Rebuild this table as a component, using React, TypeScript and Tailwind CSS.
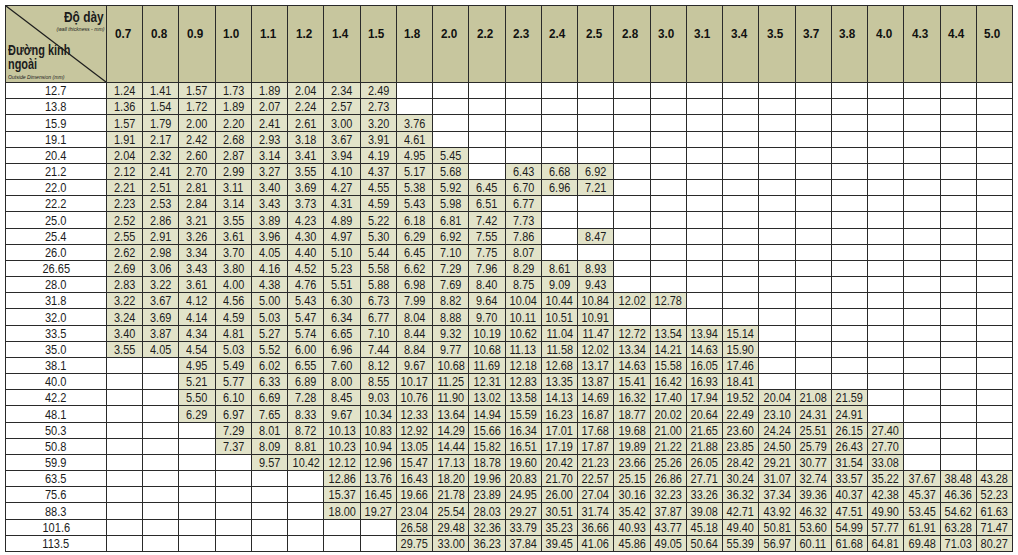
const thick = ["0.7","0.8","0.9","1.0","1.1","1.2","1.4","1.5","1.8","2.0","2.2","2.3","2.4","2.5","2.8","3.0","3.1","3.4","3.5","3.7","3.8","4.0","4.3","4.4","5.0"];

// "-" marks an empty cell
const rows: [string, string][] = [
  ["12.7", "1.24 1.41 1.57 1.73 1.89 2.04 2.34 2.49"],
  ["13.8", "1.36 1.54 1.72 1.89 2.07 2.24 2.57 2.73"],
  ["15.9", "1.57 1.79 2.00 2.20 2.41 2.61 3.00 3.20 3.76"],
  ["19.1", "1.91 2.17 2.42 2.68 2.93 3.18 3.67 3.91 4.61"],
  ["20.4", "2.04 2.32 2.60 2.87 3.14 3.41 3.94 4.19 4.95 5.45"],
  ["21.2", "2.12 2.41 2.70 2.99 3.27 3.55 4.10 4.37 5.17 5.68 - 6.43 6.68 6.92"],
  ["22.0", "2.21 2.51 2.81 3.11 3.40 3.69 4.27 4.55 5.38 5.92 6.45 6.70 6.96 7.21"],
  ["22.2", "2.23 2.53 2.84 3.14 3.43 3.73 4.31 4.59 5.43 5.98 6.51 6.77"],
  ["25.0", "2.52 2.86 3.21 3.55 3.89 4.23 4.89 5.22 6.18 6.81 7.42 7.73"],
  ["25.4", "2.55 2.91 3.26 3.61 3.96 4.30 4.97 5.30 6.29 6.92 7.55 7.86 - 8.47"],
  ["26.0", "2.62 2.98 3.34 3.70 4.05 4.40 5.10 5.44 6.45 7.10 7.75 8.07"],
  ["26.65", "2.69 3.06 3.43 3.80 4.16 4.52 5.23 5.58 6.62 7.29 7.96 8.29 8.61 8.93"],
  ["28.0", "2.83 3.22 3.61 4.00 4.38 4.76 5.51 5.88 6.98 7.69 8.40 8.75 9.09 9.43"],
  ["31.8", "3.22 3.67 4.12 4.56 5.00 5.43 6.30 6.73 7.99 8.82 9.64 10.04 10.44 10.84 12.02 12.78"],
  ["32.0", "3.24 3.69 4.14 4.59 5.03 5.47 6.34 6.77 8.04 8.88 9.70 10.11 10.51 10.91"],
  ["33.5", "3.40 3.87 4.34 4.81 5.27 5.74 6.65 7.10 8.44 9.32 10.19 10.62 11.04 11.47 12.72 13.54 13.94 15.14"],
  ["35.0", "3.55 4.05 4.54 5.03 5.52 6.00 6.96 7.44 8.84 9.77 10.68 11.13 11.58 12.02 13.34 14.21 14.63 15.90"],
  ["38.1", "- - 4.95 5.49 6.02 6.55 7.60 8.12 9.67 10.68 11.69 12.18 12.68 13.17 14.63 15.58 16.05 17.46"],
  ["40.0", "- - 5.21 5.77 6.33 6.89 8.00 8.55 10.17 11.25 12.31 12.83 13.35 13.87 15.41 16.42 16.93 18.41"],
  ["42.2", "- - 5.50 6.10 6.69 7.28 8.45 9.03 10.76 11.90 13.02 13.58 14.13 14.69 16.32 17.40 17.94 19.52 20.04 21.08 21.59"],
  ["48.1", "- - 6.29 6.97 7.65 8.33 9.67 10.34 12.33 13.64 14.94 15.59 16.23 16.87 18.77 20.02 20.64 22.49 23.10 24.31 24.91"],
  ["50.3", "- - - 7.29 8.01 8.72 10.13 10.83 12.92 14.29 15.66 16.34 17.01 17.68 19.68 21.00 21.65 23.60 24.24 25.51 26.15 27.40"],
  ["50.8", "- - - 7.37 8.09 8.81 10.23 10.94 13.05 14.44 15.82 16.51 17.19 17.87 19.89 21.22 21.88 23.85 24.50 25.79 26.43 27.70"],
  ["59.9", "- - - - 9.57 10.42 12.12 12.96 15.47 17.13 18.78 19.60 20.42 21.23 23.66 25.26 26.05 28.42 29.21 30.77 31.54 33.08"],
  ["63.5", "- - - - - - 12.86 13.76 16.43 18.20 19.96 20.83 21.70 22.57 25.15 26.86 27.71 30.24 31.07 32.74 33.57 35.22 37.67 38.48 43.28"],
  ["75.6", "- - - - - - 15.37 16.45 19.66 21.78 23.89 24.95 26.00 27.04 30.16 32.23 33.26 36.32 37.34 39.36 40.37 42.38 45.37 46.36 52.23"],
  ["88.3", "- - - - - - 18.00 19.27 23.04 25.54 28.03 29.27 30.51 31.74 35.42 37.87 39.08 42.71 43.92 46.32 47.51 49.90 53.45 54.62 61.63"],
  ["101.6", "- - - - - - - - 26.58 29.48 32.36 33.79 35.23 36.66 40.93 43.77 45.18 49.40 50.81 53.60 54.99 57.77 61.91 63.28 71.47"],
  ["113.5", "- - - - - - - - 29.75 33.00 36.23 37.84 39.45 41.06 45.86 49.05 50.64 55.39 56.97 60.11 61.68 64.81 69.48 71.03 80.27"],
];

function cellsOf(s: string) {
  const v = s.split(" ");
  const out: string[] = [];
  for (let i = 0; i < 25; i++) out.push(v[i] && v[i] !== "-" ? v[i] : "");
  return out;
}

export default function App() {
  return (
    <div className="w-[1018px] h-[555px] bg-white pt-[5px] pl-[5px] font-['Liberation_Sans',Arial,sans-serif] text-[#1c1c1c]">
      <div className="w-[1008px] h-[547px] bg-[#2a2a2a] border border-[#2a2a2a] grid grid-cols-[100px_repeat(25,minmax(0,1fr))] grid-rows-[76px_repeat(29,minmax(0,1fr))] gap-px">
        {/* corner header cell */}
        <div className="relative bg-[#c7c69e] overflow-hidden">
          <svg className="absolute inset-0 w-full h-full" viewBox="0 0 100 76" preserveAspectRatio="none">
            <line x1="0" y1="0" x2="100" y2="76" stroke="#1e1e1e" strokeWidth="1.3" />
          </svg>
          <div className="absolute right-[2px] top-[4px] flex flex-col items-end leading-none">
            <span className="text-[14px] font-bold inline-block origin-right scale-x-[0.85]">Độ dày</span>
            <span className="text-[6px] italic mt-[2px] inline-block origin-right scale-x-[0.85] whitespace-nowrap">(wall thickness - mm)</span>
          </div>
          <div className="absolute left-[2px] top-[37px] flex flex-col items-start leading-none">
            <span className="text-[14px] font-bold leading-[14px] inline-block origin-left scale-x-[0.78] whitespace-nowrap">Đường kính</span>
            <span className="text-[14px] font-bold leading-[14px] inline-block origin-left scale-x-[0.78]">ngoài</span>
            <span className="text-[6px] italic mt-[3px] inline-block origin-left scale-x-[0.85] whitespace-nowrap">Outside Dimension (mm)</span>
          </div>
        </div>
        {thick.map((t) => (
          <div key={t} className="bg-[#c7c69e] flex justify-center pt-[18px] pr-[4px] text-[13px] font-bold text-[#111]">
            <span className="inline-block scale-x-[0.9]">{t}</span>
          </div>
        ))}
        {rows.map(([d, vals]) => (
          <>
            <div key={d} className="bg-white flex items-end justify-center text-[13px] leading-[15px]">
              <span className="inline-block scale-x-[0.85]">{d}</span>
            </div>
            {cellsOf(vals).map((v, i) => (
              <div
                key={d + "-" + i}
                className={
                  "flex items-end justify-center text-[13px] leading-[15px] " +
                  (v ? "bg-[#e2e3c9]" : "bg-white")
                }
              >
                <span className="inline-block scale-x-[0.84] whitespace-nowrap">{v}</span>
              </div>
            ))}
          </>
        ))}
      </div>
    </div>
  );
}
